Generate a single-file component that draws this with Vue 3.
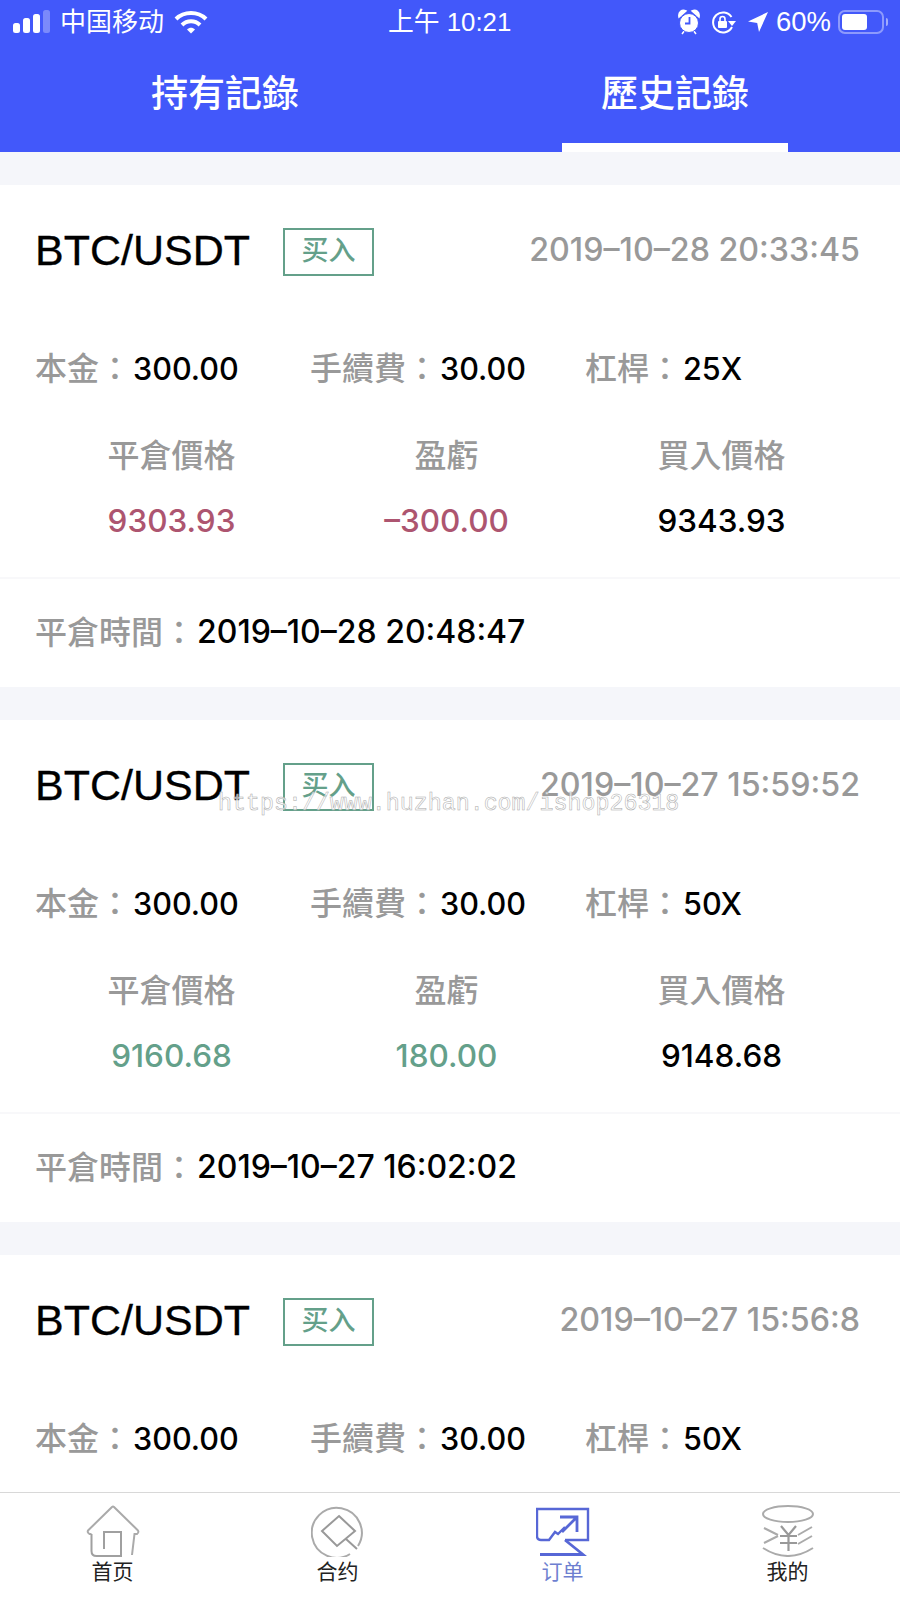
<script setup>
const orders = [
  { time: '2019–10–28 20:33:45', lev: '25X', close: '9303.93', pnl: '–300.00', buy: '9343.93', tone: 'loss', closed: '2019–10–28 20:48:47' },
  { time: '2019–10–27 15:59:52', lev: '50X', close: '9160.68', pnl: '180.00', buy: '9148.68', tone: 'gain', closed: '2019–10–27 16:02:02' },
  { time: '2019–10–27 15:56:8', lev: '50X', close: '', pnl: '', buy: '', tone: 'gain', closed: '' }
]
</script>

<template>
  <div class="page">
    <header class="head">
      <div class="status">
        <div class="st-left">
          <svg width="37" height="24" viewBox="0 0 37 24">
            <rect x="0" y="13" width="7" height="10" rx="2.500" fill="#fff"/>
            <rect x="10" y="8" width="7" height="15" rx="2.500" fill="#fff"/>
            <rect x="20" y="4" width="7" height="19" rx="2.500" fill="#fff"/>
            <rect x="30" y="0" width="7" height="23" rx="2.500" fill="#fff" opacity=".3"/>
          </svg>
          <span class="carrier">中国移动</span>
          <svg width="34" height="24" viewBox="0 0 34 24" fill="none" stroke="#fff" stroke-width="4">
            <path d="M2 9C10 1 24 1 32 9"/>
            <path d="M8 15C13 10 21 10 26 15"/>
            <path d="M13 19.500l4 4 4-4C18.500 17 15.500 17 13 19.500Z" fill="#fff" stroke="none"/>
          </svg>
        </div>
        <div class="st-time">上午 10:21</div>
        <div class="st-right">
          <svg width="24" height="26" viewBox="0 0 24 26">
            <path d="M2 8C1 3 5 0 9 2zM22 8c1-5-3-8-7-6zM5 25l3-4M19 25l-3-4" fill="#fff" stroke="#fff" stroke-width="1.500"/>
            <circle cx="12" cy="14" r="9.500" fill="#fff" stroke="#4258fa" stroke-width="1"/>
            <path d="M12.500 8v6.500H8" fill="none" stroke="#4258fa" stroke-width="1.800"/>
          </svg>
          <svg class="lock" width="25" height="24" viewBox="0 0 25 24" fill="none" stroke="#fff" stroke-width="2">
            <path d="M20.500 7A10 10 0 1 0 21 17"/>
            <path d="M17 11h8l-4 5z" fill="#fff" stroke="none"/>
            <rect x="7" y="11" width="9" height="7" rx="1" fill="#fff" stroke="none"/>
            <path d="M9 11V9a2.500 2.500 0 0 1 5 0v2" stroke-width="1.600"/>
          </svg>
          <svg class="arrow" width="20" height="20" viewBox="0 0 20 20"><path d="M20 0L0 9.500l9.200 1.500 1.800 9z" fill="#fff"/></svg>
          <span class="pct">60%</span>
          <div class="batt"><i class="batt-fill"></i></div>
          <i class="batt-cap"></i>
        </div>
      </div>
      <nav class="tabs">
        <div class="tab">持有記錄</div>
        <div class="tab active">歷史記錄</div>
      </nav>
    </header>

    <main class="list">
      <section v-for="o in orders" :key="o.time" class="card">
        <div class="top">
          <span class="pair">BTC/USDT</span>
          <span class="badge">买入</span>
          <span class="when">{{ o.time }}</span>
        </div>
        <div class="meta">
          <div class="m m1"><span class="lab">本金：</span><span class="val">300.00</span></div>
          <div class="m m2"><span class="lab">手續費：</span><span class="val">30.00</span></div>
          <div class="m m3"><span class="lab">杠桿：</span><span class="val">{{ o.lev }}</span></div>
        </div>
        <template v-if="o.close">
          <div class="grid">
            <div class="lab">平倉價格</div>
            <div class="lab">盈虧</div>
            <div class="lab">買入價格</div>
            <div class="num" :class="o.tone">{{ o.close }}</div>
            <div class="num" :class="o.tone">{{ o.pnl }}</div>
            <div class="num">{{ o.buy }}</div>
          </div>
          <div class="foot"><span class="lab">平倉時間：</span><span class="val stamp">{{ o.closed }}</span></div>
        </template>
      </section>
    </main>

    <div class="mark">https://www.huzhan.com/ishop26318</div>

    <footer class="bar">
      <div class="item">
        <svg width="54" height="52" viewBox="0 0 54 52" fill="none" stroke="#aaa" stroke-width="2">
          <path d="M5.500 29H3.500Q0.500 27 2.500 25L26 2Q27 1 28 2L51.500 25Q53.500 27 51 29H48.500L46 50"/>
          <path d="M5.500 29V46Q5.500 51 10.500 51H35V27H18V44" stroke="#a0a0a0"/>
        </svg>
        <span>首页</span>
      </div>
      <div class="item">
        <svg width="54" height="52" viewBox="0 0 54 52" fill="none" stroke="#aaa" stroke-width="2">
          <path d="M39 49A25 25 0 1 1 47 41"/>
          <path d="M28 11L44 26 26 41 11 26Z M35 34L46 44" stroke="#999"/>
        </svg>
        <span>合约</span>
      </div>
      <div class="item on">
        <svg width="54" height="52" viewBox="0 0 54 52" fill="none" stroke="#5767d6" stroke-width="2.400">
          <path d="M29 35H52V4H1V31Q1 35 5 35H13L19 27 22 29 29 22"/>
          <path d="M24 12H41V27M41 12L26 27" stroke-width="2.800"/>
          <path d="M29 35L47 49.500H4" stroke-width="2.800"/>
        </svg>
        <span>订单</span>
      </div>
      <div class="item">
        <svg width="54" height="52" viewBox="0 0 54 52" fill="none" stroke="#aaa" stroke-width="2">
          <ellipse cx="27" cy="9" rx="25" ry="8"/>
          <path d="M3 23L17 30M3 38L17 31M51 22L37 30M51 31L37 39M2 43Q27 59 52 43"/>
          <path d="M20 21L27.500 30 35 21M19 31H36M19 38H36M27.500 30V46" stroke="#999" stroke-width="2.200"/>
        </svg>
        <span>我的</span>
      </div>
    </footer>
  </div>
</template>

<style>
html, body { margin: 0; padding: 0; background: #fff; }
</style>

<style scoped>
.page {
  position: relative;
  width: 900px;
  height: 1600px;
  overflow: hidden;
  display: flex;
  flex-direction: column;
  background: #f5f6fa;
  font-family: "Liberation Sans", "Noto Sans CJK TC", sans-serif;
}
.head { height: 152px; background: #4258fa; color: #fff; flex: none; }
.status {
  height: 44px;
  display: flex;
  align-items: center;
  justify-content: space-between;
  position: relative;
  padding: 0 12px 0 13px;
  font-size: 26px;
  font-family: "Liberation Sans", "Noto Sans CJK SC", sans-serif;
}
.st-left { display: flex; align-items: center; }
.carrier { margin: -5px 10px 0; }
.st-time { position: absolute; left: 388px; top: 0; line-height: 44px; font-size: 25.800px; }
.st-right { display: flex; align-items: center; }
.lock { margin-left: 10px; }
.arrow { margin-left: 12px; }
.pct { margin-left: 8px; font-size: 27.500px; }
.batt { margin-left: 7px; width: 46px; height: 24px; border: 2px solid rgba(255,255,255,.4); border-radius: 7px; box-sizing: border-box; padding: 2px; }
.batt-fill { display: block; width: 25px; height: 16px; background: #fff; border-radius: 3px; }
.batt-cap { display: block; width: 2px; height: 8px; margin-left: 2px; background: rgba(255,255,255,.5); border-radius: 0 2px 2px 0; }
.tabs { display: grid; grid-template-columns: 1fr 1fr; height: 108px; }
.tab {
  position: relative;
  text-align: center;
  font-size: 37px;
  font-weight: 500;
  line-height: 102px;
  height: 108px;
}
.tab.active::after {
  content: "";
  position: absolute;
  left: 112px;
  width: 226px;
  bottom: 0;
  height: 9px;
  background: #fff;
}
.list { flex: 1; min-height: 0; overflow: hidden; padding-top: 33px; display: flex; flex-direction: column; gap: 33px; }
.card { background: #fff; flex: none; height: 502px; }
.top {
  height: 130px;
  display: flex;
  align-items: center;
  padding: 0 40px 0 35px;
}
.pair { font-size: 43px; color: #000; -webkit-text-stroke: 0.3px #000; }
.badge {
  margin: 4px 0 0 33px;
  width: 91px;
  height: 48px;
  box-sizing: border-box;
  border: 2px solid #64a08a;
  color: #64a08a;
  font-size: 27px;
  font-weight: 500;
  text-align: center;
  line-height: 42px;
  font-family: "Liberation Sans", "Noto Sans CJK SC", sans-serif;
}
.when { margin: -2px 0 0 auto; font-family: Inter, sans-serif; font-size: 32.200px; font-weight: 500; color: #999; }
.meta { display: flex; height: 108px; align-items: center; padding-left: 35px; }
.m { display: flex; align-items: center; margin-top: -2px; }
.m1 { width: 275px; }
.m2 { width: 275px; }
.lab { color: #999; font-size: 32px; font-weight: 500; }
.m .lab, .foot .lab { margin-top: -4px; }
.val { color: #000; font-family: Inter, sans-serif; font-size: 30.600px; font-weight: 500; margin-left: 2px; }
.val.stamp { font-size: 32px; margin-top: -2px; }
.grid { display: grid; grid-template-columns: repeat(3, 275px); padding: 0 0 24px 34px; justify-items: center; }
.grid .lab { height: 66px; line-height: 66px; }
.num { height: 64px; line-height: 64px; font-family: Inter, sans-serif; font-size: 31.500px; font-weight: 500; color: #000; }
.num.loss { color: #ad5570; }
.num.gain { color: #64a08a; }
.foot { border-top: 2px solid #f8f8fa; height: 110px; box-sizing: border-box; padding: 0 0 2px 35px; display: flex; align-items: center; }
.mark {
  position: absolute;
  left: 218px;
  top: 789px;
  font-family: "Liberation Mono", monospace;
  font-size: 23.300px;
  line-height: 30px;
  color: rgba(255,255,255,.7);
  -webkit-text-stroke: 0.5px #a8a8a8;
  white-space: nowrap;
}
.bar {
  flex: none;
  height: 108px;
  background: #fff;
  border-top: 1px solid #d8d8d8;
  display: grid;
  grid-template-columns: repeat(4, 225px);
  box-sizing: border-box;
}
.item { display: flex; flex-direction: column; align-items: center; padding-top: 12px; font-size: 21px; color: #222; line-height: 24px; font-family: "Liberation Sans", "Noto Sans CJK SC", sans-serif; }
.item svg { display: block; margin-bottom: 3px; }
.item.on { color: #6e7fd0; }
</style>
